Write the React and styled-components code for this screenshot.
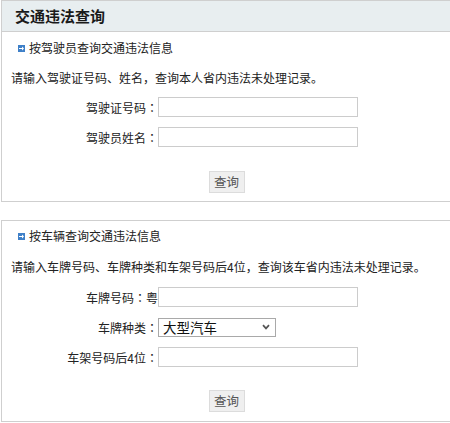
import React from "react";
import styled, { createGlobalStyle } from "styled-components";

const Global = createGlobalStyle`
  html, body { margin: 0; padding: 0; background: #fff; overflow: hidden; }
  body {
    font-family: "Noto Sans CJK SC", "Noto Sans", sans-serif;
    font-size: 12px;
    color: #333;
  }
`;

const Page = styled.div`
  width: 450px;
  height: 423px;
  overflow: hidden;
`;

const Panel = styled.section`
  width: 470px;
  margin-left: 1px;
  margin-top: ${(p) => p.$top || 0}px;
  border: 1px solid #cfcfcf;
  padding-bottom: ${(p) => p.$bottom || 8}px;
`;

const TitleBar = styled.h2`
  margin: 0;
  height: 30px;
  line-height: 30px;
  padding-left: 13px;
  background: #e8eef0;
  border-bottom: 1px solid #cfcfcf;
  font-size: 15px;
  font-weight: bold;
  color: #1a1a1a;
`;

const SectionHead = styled.h3`
  margin: 0;
  padding: ${(p) => p.$pad}px 0 0 16px;
  display: flex;
  align-items: center;
  gap: 4px;
  height: 20px;
  line-height: 20px;
  box-sizing: content-box;
  font-size: 12px;
  font-weight: normal;
  color: #222;
`;

const Desc = styled.p`
  margin: ${(p) => p.$gap}px 0 0 0;
  padding-left: 9px;
  height: 20px;
  line-height: 20px;
  color: #222;
  white-space: nowrap;
`;

const Form = styled.div`
  width: 449px;
  margin-top: ${(p) => p.$gap}px;
  display: flex;
  flex-direction: column;
  gap: 10px;
`;

const Row = styled.label`
  display: grid;
  grid-template-columns: 156px auto;
  align-items: center;
  height: 20px;
`;

const Label = styled.span`
  text-align: right;
  color: #222;
  white-space: nowrap;
`;

const Colon = styled.span`
  font-family: "Noto Sans CJK TC", "Noto Sans CJK SC", sans-serif;
`;

const TextInput = styled.input`
  box-sizing: border-box;
  width: 200px;
  height: 20px;
  border: 1px solid #cccccc;
  margin: 0;
  padding: 0 3px;
  font: inherit;
  outline: none;
`;

const SelectWrap = styled.div`
  position: relative;
  width: 118px;
  height: 19px;
`;

const Select = styled.select`
  appearance: none;
  -webkit-appearance: none;
  box-sizing: border-box;
  width: 118px;
  height: 19px;
  margin: 0;
  border: 1px solid #a9a9a9;
  border-radius: 0;
  background: #fff;
  padding: 0 0 0 4px;
  font-family: "Noto Sans CJK SC", sans-serif;
  font-size: 13.5px;
  line-height: 17px;
  color: #111;
  outline: none;
`;

const Chevron = styled.svg`
  position: absolute;
  right: 6px;
  top: 6px;
  pointer-events: none;
`;

const ButtonRow = styled.div`
  width: 449px;
  margin-top: ${(p) => p.$gap}px;
  display: flex;
  justify-content: center;
`;

const Button = styled.button`
  box-sizing: border-box;
  height: 22px;
  width: 36px;
  padding: 0;
  margin: 0;
  border: 1px solid #dcdcdc;
  background: #efefef;
  color: #555;
  font-family: "Noto Sans CJK SC", sans-serif;
  font-size: 12.5px;
  line-height: 20px;
  cursor: pointer;
`;

const Bullet = () => (
  <svg width="7" height="7" viewBox="0 0 7 7" aria-hidden="true">
    <rect x="0" y="0" width="7" height="7" fill="#3f80c8" />
    <path d="M1 3h3V1.5L6 3.5 4 5.5V4H1z" fill="#fff" />
  </svg>
);

const FieldLabel = ({ text, suffix }) => (
  <Label>
    {text}
    <Colon>：</Colon>
    {suffix}
  </Label>
);

export default function App() {
  return (
    <Page>
      <Global />
      <Panel $bottom={8}>
        <TitleBar>交通违法查询</TitleBar>
        <SectionHead $pad={6}>
          <Bullet />
          按驾驶员查询交通违法信息
        </SectionHead>
        <Desc $gap={10}>请输入驾驶证号码、姓名，查询本人省内违法未处理记录。</Desc>
        <Form $gap={9}>
          <Row>
            <FieldLabel text="驾驶证号码" />
            <TextInput type="text" />
          </Row>
          <Row>
            <FieldLabel text="驾驶员姓名" />
            <TextInput type="text" />
          </Row>
        </Form>
        <ButtonRow $gap={24}>
          <Button type="button">查询</Button>
        </ButtonRow>
      </Panel>
      <Panel $top={18} $bottom={9}>
        <SectionHead $pad={5}>
          <Bullet />
          按车辆查询交通违法信息
        </SectionHead>
        <Desc $gap={11}>请输入车牌号码、车牌种类和车架号码后4位，查询该车省内违法未处理记录。</Desc>
        <Form $gap={10}>
          <Row>
            <FieldLabel text="车牌号码" suffix="粤" />
            <TextInput type="text" />
          </Row>
          <Row>
            <FieldLabel text="车牌种类" />
            <SelectWrap>
              <Select defaultValue="big">
                <option value="big">大型汽车</option>
                <option value="small">小型汽车</option>
              </Select>
              <Chevron width="8" height="6" viewBox="0 0 8 6">
                <path d="M1 1.2L4 4.4L7 1.2" fill="none" stroke="#555" strokeWidth="1.7" />
              </Chevron>
            </SelectWrap>
          </Row>
          <Row>
            <FieldLabel text="车架号码后4位" />
            <TextInput type="text" />
          </Row>
        </Form>
        <ButtonRow $gap={23}>
          <Button type="button">查询</Button>
        </ButtonRow>
      </Panel>
    </Page>
  );
}
